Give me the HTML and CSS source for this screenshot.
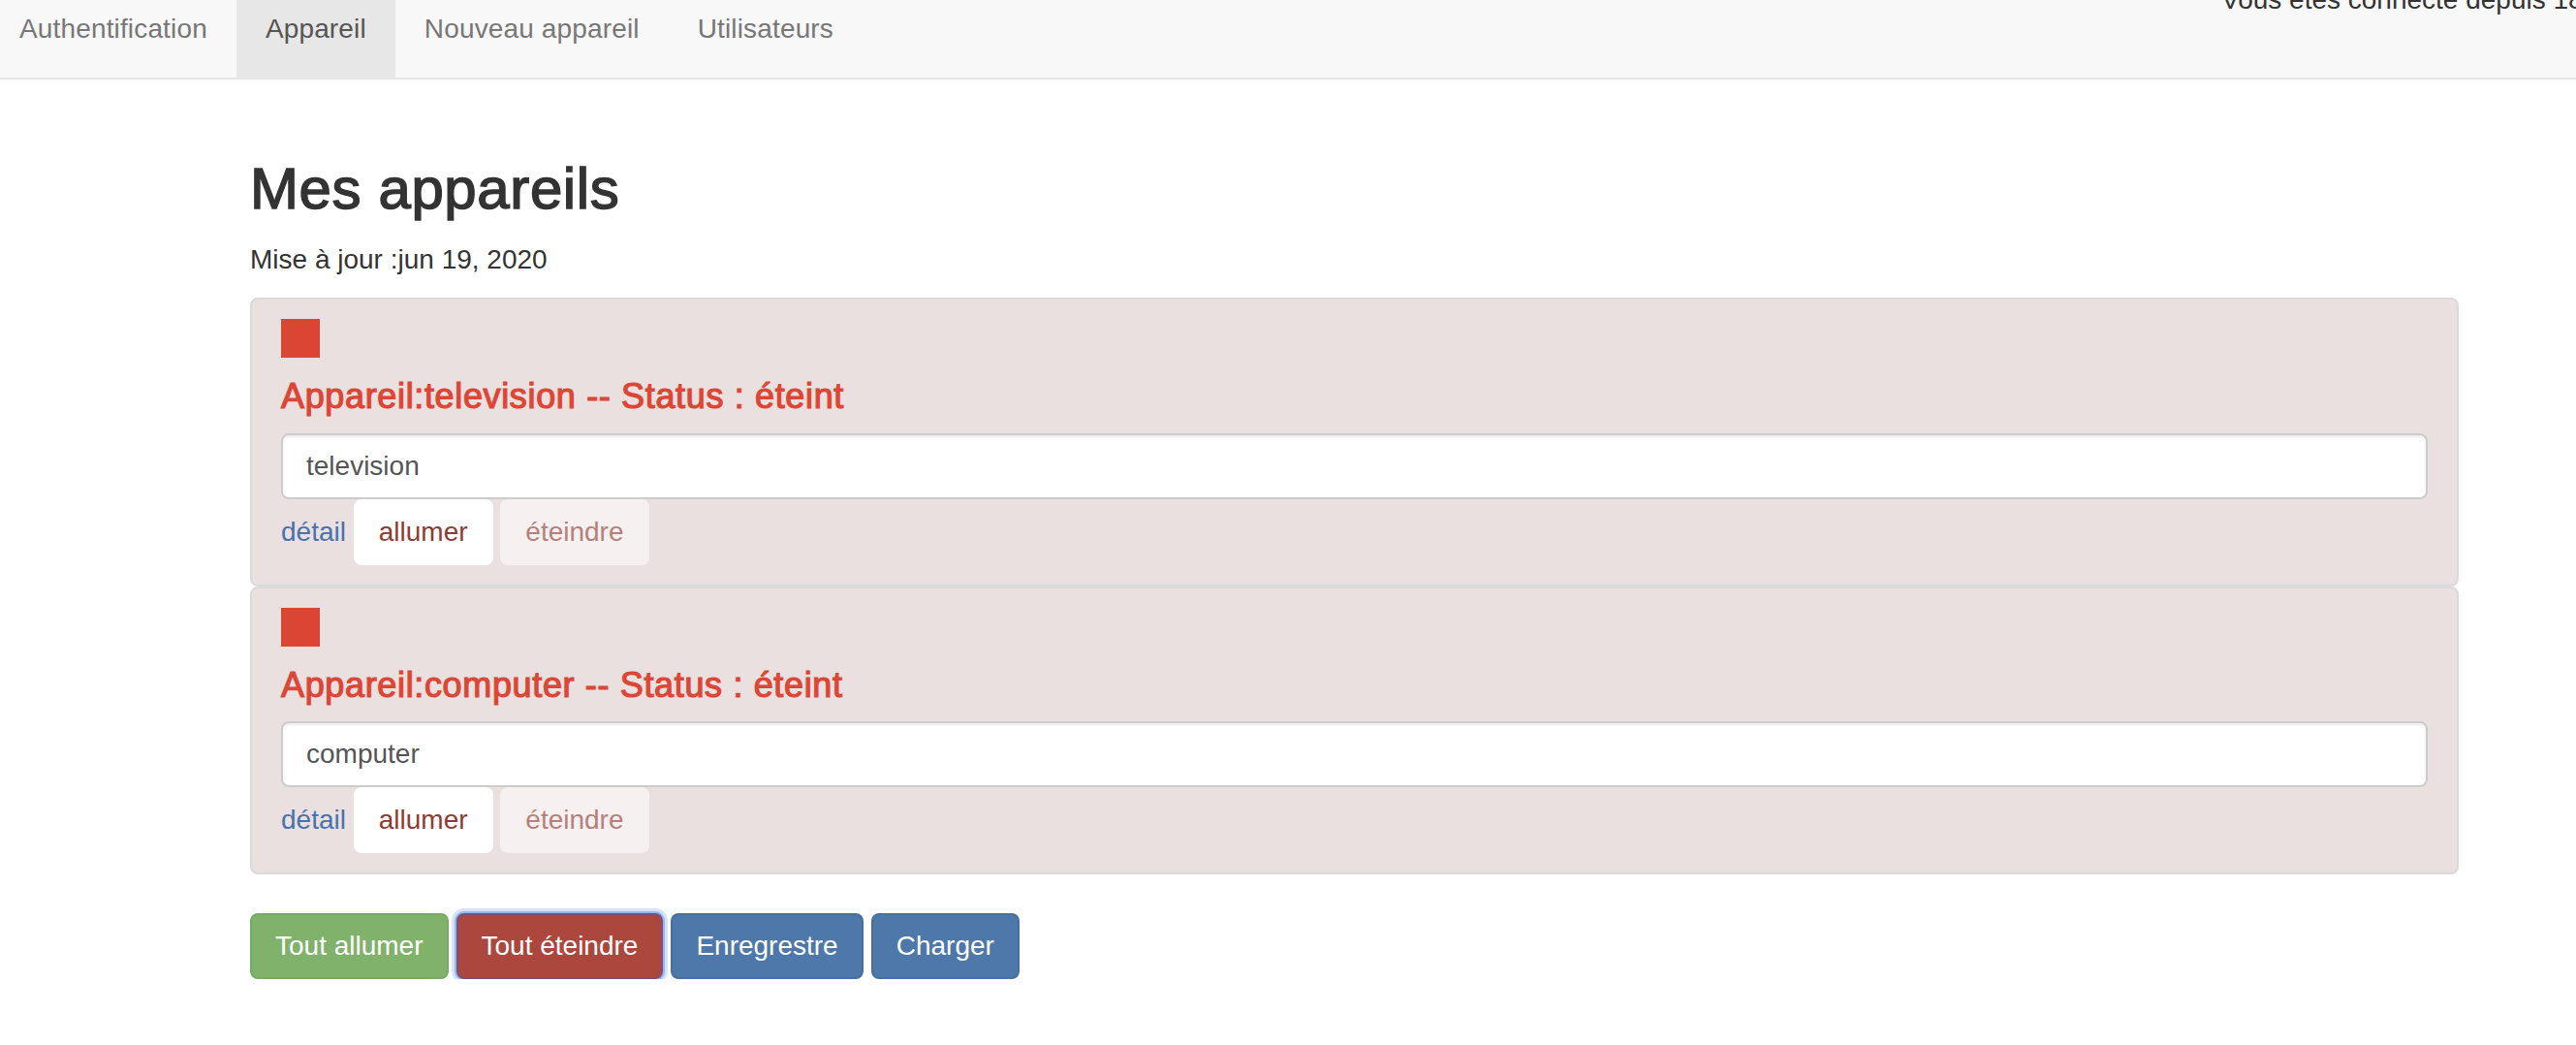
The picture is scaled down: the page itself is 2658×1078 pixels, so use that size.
FILE: index.html
```html
<!DOCTYPE html>
<html lang="fr">
<head>
<meta charset="utf-8">
<title>Mes appareils</title>
<link rel="stylesheet" href="styles.css">
</head>
<body>
<nav class="navbar">
  <ul class="nav">
    <li><a href="#">Authentification</a></li>
    <li class="active"><a href="#">Appareil</a></li>
    <li><a href="#">Nouveau appareil</a></li>
    <li><a href="#">Utilisateurs</a></li>
  </ul>
  <p class="navbar-text">Vous êtes connecté depuis 18:42:07</p>
</nav>
<main class="container">
  <h2 class="title">Mes appareils</h2>
  <p class="updated">Mise à jour :jun 19, 2020</p>
  <ul class="devices">
    <li class="device">
      <div class="status-square"></div>
      <h4 class="device-title">Appareil:television -- Status : éteint</h4>
      <input class="form-control" type="text" value="television">
      <div class="device-actions"><a class="detail" href="#">détail</a> <button class="btn btn-device">allumer</button> <button class="btn btn-device" disabled>éteindre</button></div>
    </li>
    <li class="device">
      <div class="status-square"></div>
      <h4 class="device-title">Appareil:computer -- Status : éteint</h4>
      <input class="form-control" type="text" value="computer">
      <div class="device-actions"><a class="detail" href="#">détail</a> <button class="btn btn-device">allumer</button> <button class="btn btn-device" disabled>éteindre</button></div>
    </li>
  </ul>
  <div class="actions">
    <button class="btn btn-success">Tout allumer</button>
    <button class="btn btn-danger btn-focus">Tout éteindre</button>
    <button class="btn btn-primary">Enregrestre</button>
    <button class="btn btn-primary">Charger</button>
  </div>
</main>
</body>
</html>
```

FILE: styles.css
```css
* { box-sizing: border-box; }
html { overflow: hidden; }
body {
  margin: 0;
  font-family: "Liberation Sans", Arial, Helvetica, sans-serif;
  font-size: 28px;
  line-height: 40px;
  color: #333;
  background: #fff;
}

.navbar {
  display: flex;
  align-items: flex-start;
  height: 102px;
  margin-top: -20px;
  background: #f8f8f8;
  border-bottom: 2px solid #e7e7e7;
  overflow: hidden;
}
.nav {
  display: flex;
  list-style: none;
  margin: 0 0 0 -10px;
  padding: 0;
  flex-shrink: 0;
}
.nav a {
  display: block;
  padding: 30px;
  line-height: 40px;
  letter-spacing: 0.15px;
  color: #777;
  text-decoration: none;
}
.nav .active a {
  background: #e7e7e7;
  color: #555;
}
.navbar-text {
  margin: 0 0 0 1402px;
  white-space: nowrap;
  flex-shrink: 0;
  color: #333;
}

.container {
  margin: 80px 0 0 258px;
  width: 2279px;
}
.title {
  margin: 0 0 20px;
  font-size: 60px;
  line-height: 66px;
  font-weight: 400;
  letter-spacing: 0.6px;
  -webkit-text-stroke: 1.5px #333;
  color: #333;
}
.updated {
  margin: 0 0 19px;
}

.devices {
  list-style: none;
  margin: 0 0 40px;
  padding: 0;
}
.device {
  background: #eae0df;
  border: 2px solid #dadada;
  border-radius: 8px;
  padding: 20px 30px;
}
.status-square {
  width: 40px;
  height: 40px;
  background: #db4533;
}
.device-title {
  margin: 20px 0 18px;
  font-size: 36px;
  line-height: 39.6px;
  font-weight: 400;
  letter-spacing: 0.65px;
  color: #dc4636;
  -webkit-text-stroke: 1.2px #dc4636;
}
.form-control {
  display: block;
  width: 100%;
  height: 68px;
  padding: 12px 24px;
  font: inherit;
  color: #555;
  background: #fff;
  border: 2px solid #ccc;
  border-radius: 8px;
  box-shadow: inset 0 2px 2px rgba(0, 0, 0, 0.075);
  outline: none;
}
.device-actions {
  line-height: 40px;
}
.detail {
  color: #4872ad;
  text-decoration: none;
}

.btn {
  display: inline-block;
  padding: 12px 24px;
  font: inherit;
  line-height: 40px;
  border: 2px solid transparent;
  border-radius: 8px;
  cursor: pointer;
  white-space: nowrap;
}
.btn-device {
  background: #fff;
  border-color: #fff;
  color: #8e3b33;
}
.btn-device:disabled {
  background: #f6f1f0;
  border-color: #f6f1f0;
  color: #b77f7a;
  cursor: not-allowed;
}

.actions {
  display: flex;
  gap: 8px;
}
.btn-success {
  background: #80b26b;
  border-color: #79aa64;
  color: #fff;
}
.btn-danger {
  background: #ab473d;
  border-color: #9a3f37;
  color: #fff;
}
.btn-focus {
  border-color: #7d4f78;
  box-shadow: 0 0 0 2px #93b8ef, 0 0 0 5px rgba(147, 184, 239, 0.4);
}
.btn-primary {
  background: #4e77aa;
  border-color: #48709f;
  color: #fff;
}
```
